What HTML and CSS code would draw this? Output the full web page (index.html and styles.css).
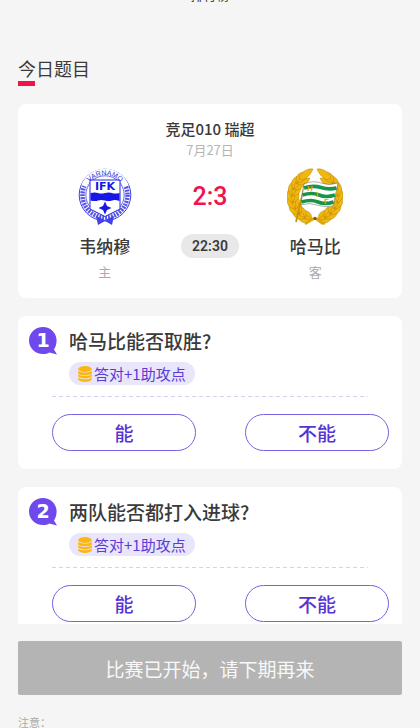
FILE: index.html
```html
<!DOCTYPE html>
<html lang="zh-CN">

<head>
  <meta charset="UTF-8">
  <meta name="viewport" content="width=device-width, initial-scale=1.0">
  <title>今日题目</title>
  <link rel="stylesheet" href="styles.css">
</head>

<body>
  <!-- shared shapes -->
  <svg class="defs" width="0" height="0" aria-hidden="true">
    <symbol id="coins" viewBox="0 0 14 16">
      <g fill="#fbb60f">
        <ellipse cx="7" cy="3" rx="6.8" ry="3" />
        <path d="M.2 4.800C2 7.200 12 7.200 13.800 4.800V7.400C12 9.800 2 9.800 .2 7.400Z" />
        <path d="M.2 8.200C2 10.600 12 10.600 13.800 8.200V10.600C12 13 2 13 .2 10.600Z" />
        <path d="M.2 11.400C2 13.800 12 13.800 13.800 11.400V13.600C12 16.700 2 16.700 .2 13.600Z" />
      </g>
    </symbol>
    <symbol id="bubble" viewBox="0 0 28 28">
      <path d="M14 0C21.700 0 27.600 6 27.600 13.500C27.600 17 26.500 20 25 22.500L28 27.500L20.500 25.500C18.500 26.500 16.500 27 14 27C6 27 0 21 0 13.500S6 0 14 0Z" fill="#6f49ee" />
    </symbol>
  </svg>

  <main class="content">
    <h1 class="page-title">排行榜</h1>
    <h2 class="section-title">今日题目</h2>

    <section class="card match">
      <h3 class="match-title">竞足010 瑞超</h3>
      <p class="match-date">7月27日</p>
      <div class="match-row">
        <div class="team">
          <svg class="crest" viewBox="0 0 56 58" role="img" aria-label="韦纳穆">
            <path id="crest-arc" d="M8.500 34A20.500 20.500 0 1 1 47.500 34" fill="none" />
            <circle cx="28" cy="27" r="25.800" fill="#fff" stroke="#4242e6" />
            <circle cx="28" cy="27" r="22.500" fill="none" stroke="#5656e8" stroke-width="4.500" stroke-dasharray="2 1" />
            <path d="M7 18A22.500 22.500 0 0 1 49 18" fill="none" stroke="#fff" stroke-width="5.600" />
            <circle cx="28" cy="27" r="19.200" fill="none" stroke="#4242e6" stroke-width=".8" />
            <path d="M19 48L28 52L37 48L35 57L28 53L21 57Z" fill="#4242e6" />
            <path d="M13 12H43V41L28 48.500L13 41Z" fill="#fff" stroke="#2525df" />
            <text class="crest-ring"><textPath href="#crest-arc" startOffset="50%">VARNAMO</textPath></text>
            <text class="crest-name" x="28" y="21.500">IFK</text>
            <path d="M13.500 25Q18 24 21 25T28 25T35 25T42.500 25V33Q38 31.500 35 32.500T28 32.500T21 32.500T13.500 32.500Z" fill="#1717e6" />
            <path d="M28 33.500L30 38L34.500 40L30 42L28 46.500L26 42L21.500 40L26 38Z" fill="#1717e6" />
          </svg>
          <p class="team-name">韦纳穆</p>
          <p class="team-side">主</p>
        </div>

        <div class="result">
          <p class="score">2:3</p>
          <time class="kickoff">22:30</time>
        </div>

        <div class="team">
          <svg class="crest" viewBox="0 0 56 58" role="img" aria-label="哈马比">
            <defs>
              <g id="leaf" fill="#f2b70c" stroke="#a87c10" stroke-width=".4">
                <path d="M50 35C56 32 58 27 54 21C51 25 50 29 50 35Z" />
                <path d="M50 35C44 32 42 27 46 21C49 25 50 29 50 35Z" />
                <path d="M50 34C47 29 48 24 50 19C53 24 53 29 50 34Z" />
              </g>
              <g id="branch">
                <path d="M33 51A22.500 22.500 0 0 0 37 8" fill="none" stroke="#f2b70c" stroke-width="8" />
                <use href="#leaf" transform="rotate(68 28 29)" />
                <use href="#leaf" transform="rotate(51 28 29)" />
                <use href="#leaf" transform="rotate(34 28 29)" />
                <use href="#leaf" transform="rotate(17 28 29)" />
                <use href="#leaf" />
                <use href="#leaf" transform="rotate(-17 28 29)" />
                <use href="#leaf" transform="rotate(-34 28 29)" />
                <use href="#leaf" transform="rotate(-51 28 29)" />
                <path d="M41 12C36 11 32 6 30 1C36 0 41 4 44 9Z" fill="#f2b70c" stroke="#a87c10" stroke-width=".4" />
              </g>
            </defs>
            <use href="#branch" />
            <use href="#branch" transform="translate(56 0) scale(-1 1)" />
            <path d="M38 56L28 50L18 56M28 50L36 56" fill="none" stroke="#dca50a" stroke-width="2.400" />
            <circle cx="28" cy="50.500" r="1.600" fill="#79560b" />
            <path d="M18 15L9 54" stroke="#c8920a" stroke-width="1.800" />
            <path d="M17 16Q26 12 34 15T51 15L46 38Q38 40 30 37T14 37Z" fill="#fff" stroke="#777" stroke-width=".6" />
            <g fill="none" stroke="#179447" stroke-width="3.600">
              <path d="M17 20Q26 17 34 19.500T49.500 20" />
              <path d="M15.500 27Q25 24 32 27T48 27" />
              <path d="M14.500 34Q24 31 31 34T46.500 34" />
            </g>
            <g class="flag-letter">
              <text x="20" y="22.500">H</text>
              <text x="29" y="28.500">I</text>
              <text x="37" y="35.500">F</text>
            </g>
          </svg>
          <p class="team-name">哈马比</p>
          <p class="team-side">客</p>
        </div>
      </div>
    </section>

    <section class="card question">
      <div class="question-head">
        <svg class="number" viewBox="0 0 28 28" role="img" aria-label="1">
          <use href="#bubble" />
          <text x="14" y="20">1</text>
        </svg>
        <div class="question-body">
          <h3 class="question-text">哈马比能否取胜?</h3>
          <span class="reward"><svg class="coins"><use href="#coins" /></svg>答对+1助攻点</span>
        </div>
      </div>
      <div class="divider"></div>
      <div class="options">
        <button type="button" class="option">能</button>
        <button type="button" class="option">不能</button>
      </div>
    </section>

    <section class="card question">
      <div class="question-head">
        <svg class="number" viewBox="0 0 28 28" role="img" aria-label="2">
          <use href="#bubble" />
          <text x="14" y="20">2</text>
        </svg>
        <div class="question-body">
          <h3 class="question-text">两队能否都打入进球?</h3>
          <span class="reward"><svg class="coins"><use href="#coins" /></svg>答对+1助攻点</span>
        </div>
      </div>
      <div class="divider"></div>
      <div class="options">
        <button type="button" class="option">能</button>
        <button type="button" class="option">不能</button>
      </div>
    </section>
  </main>

  <footer class="footer">
    <button type="button" class="submit" disabled>比赛已开始，请下期再来</button>
    <p class="note">注意：</p>
  </footer>
</body>

</html>
```

FILE: styles.css
```css
* {
  box-sizing: border-box;
}

body {
  display: flex;
  flex-direction: column;
  height: 100vh;
  margin: 0;
  overflow: hidden;
  background: #f5f5f5;
  color: #3a3a3a;
  font-family: "Noto Sans CJK SC", sans-serif;
}

h1,
h2,
h3,
p {
  margin: 0;
  font-weight: 400;
}

button {
  font-family: inherit;
}

.defs {
  position: absolute;
}

.content {
  flex: 1;
  min-height: 0;
  padding: 0 18px;
  overflow: hidden;
}

.page-title {
  margin-top: -15px;
  font-size: 13px;
  line-height: 20px;
  text-align: center;
}

.section-title {
  margin-top: 51px;
  font-size: 18px;
  line-height: 25px;
}

.section-title::after {
  content: "";
  display: block;
  width: 17px;
  height: 5px;
  background: #f0134d;
}

.card {
  margin-top: 18px;
  background: #fff;
  border-radius: 8px;
}

/* match */
.match {
  padding: 14px 34px 16px;
  text-align: center;
}

.match-title {
  font-size: 15px;
  font-weight: 500;
  line-height: 22px;
}

.match-date {
  color: #b5b5b5;
  font-size: 13px;
  line-height: 20px;
}

.match-row {
  display: grid;
  grid-template-columns: repeat(3, 1fr);
  margin-top: 8px;
}

.crest {
  display: block;
  width: 56px;
  height: 58px;
  margin: 0 auto;
}

.crest-ring {
  fill: #2f2fe0;
  font: 7px "Liberation Sans", sans-serif;
  text-anchor: middle;
}

.crest-name {
  fill: #1717e6;
  font: bold 11px "DejaVu Sans", sans-serif;
  text-anchor: middle;
}

.flag-letter {
  fill: #d9a514;
  font: bold 8px "Liberation Sans", sans-serif;
}

.team-name {
  margin-top: 8px;
  font-size: 17px;
  font-weight: 500;
  line-height: 24px;
}

.team-side {
  margin-top: 4px;
  color: #aaa;
  font-size: 13px;
  line-height: 20px;
}

.score {
  color: #f0134d;
  font-family: Roboto, sans-serif;
  font-size: 25px;
  font-weight: 500;
  line-height: 58px;
}

.kickoff {
  display: inline-block;
  margin-top: 8px;
  padding: 0 11px;
  border-radius: 12px;
  background: #e8e8e8;
  font-family: Roboto, sans-serif;
  font-size: 14px;
  font-weight: 600;
  line-height: 24px;
}

/* questions */
.question {
  padding: 11px 13px 18px 11px;
}

.question-head {
  display: flex;
  gap: 12px;
}

.number {
  flex: none;
  width: 28px;
  height: 28px;
}

.number text {
  fill: #fff;
  font: bold 19px "DejaVu Sans", sans-serif;
  text-anchor: middle;
}

.question-text {
  font-size: 19px;
  font-weight: 500;
  line-height: 28px;
}

.reward {
  display: flex;
  align-items: center;
  gap: 2px;
  width: max-content;
  height: 23px;
  margin-top: 7px;
  padding: 0 9px;
  border-radius: 12px;
  background: #e9e5fa;
  color: #5b3bd6;
  font-size: 15px;
  line-height: 23px;
}

.coins {
  width: 14px;
  height: 16px;
}

.divider {
  height: 1px;
  margin: 11px 21px 0 23px;
  background: repeating-linear-gradient(90deg, #d5d0f5 0 4px, transparent 4px 7px);
}

.options {
  display: flex;
  gap: 49px;
  margin: 17px 0 0 23px;
}

.option {
  flex: 1;
  height: 37px;
  padding: 0;
  border: 1px solid #7a5fe0;
  border-radius: 19px;
  background: #fff;
  color: #5634d4;
  font-size: 19px;
  font-weight: 500;
  line-height: 34px;
}

/* bottom bar */
.footer {
  padding: 17px 18px 0;
}

.submit {
  display: block;
  width: 100%;
  height: 54px;
  border: 0;
  border-radius: 2px;
  background: #b4b4b4;
  color: #f8f8f8;
  font-size: 19px;
}

.note {
  margin-top: 22px;
  color: #aaa;
  font-size: 11px;
  line-height: 11px;
}
```
